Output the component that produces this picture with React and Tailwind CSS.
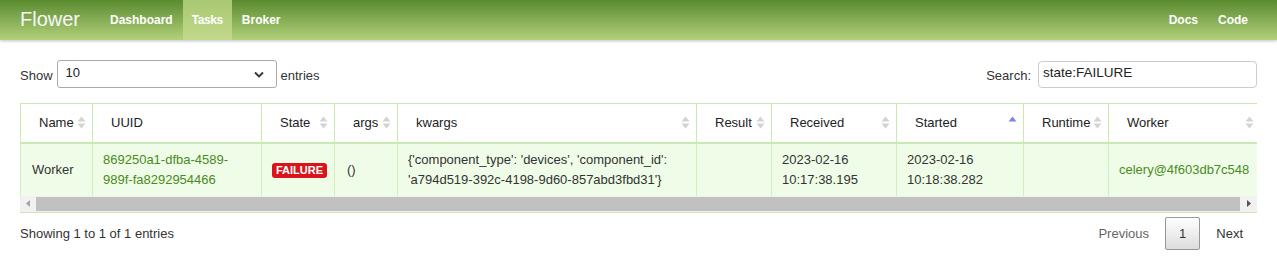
import React from "react";

const SortIcon = ({ dir }) => (
    <svg width="9" height="13" viewBox="0 0 9 13" className="shrink-0">
        <polygon points="4.5,0.5 8.5,5.5 0.5,5.5" fill={dir === "asc" ? "#8181e6" : dir ? "transparent" : "#d3d3d3"} />
        <polygon points="0.5,7.5 8.5,7.5 4.5,12.5" fill={dir ? "transparent" : "#d3d3d3"} />
    </svg>
);

const columns = [
    { name: "Name", w: 72 },
    { name: "UUID", w: 169, nosort: true },
    { name: "State", w: 73 },
    { name: "args", w: 63 },
    { name: "kwargs", w: 299 },
    { name: "Result", w: 75 },
    { name: "Received", w: 125 },
    { name: "Started", w: 127, dir: "asc" },
    { name: "Runtime", w: 85 },
    { name: "Worker", w: 152 },
];

export default function App() {
    return (
        <div className="min-h-screen bg-white text-[13px] text-[#333] font-['Liberation_Sans',Arial,sans-serif]">
            {/* navbar */}
            <nav className="h-[40px] flex items-stretch justify-between bg-gradient-to-b from-[#5a8b2f] to-[#b3d17b] shadow-[0_1px_3px_rgba(0,0,0,0.25)]">
                <div className="flex items-stretch">
                    <a className="pl-[20px] pr-[20px] flex items-center text-[20px] text-[#f7f7f7] pb-[2px]">Flower</a>
                    <a className="px-[10px] flex items-center text-[12px] font-bold text-white">Dashboard</a>
                    <a className="px-[9px] flex items-center text-[12px] font-bold text-white tracking-[-0.4px] bg-gradient-to-b from-[#a9c873] to-[#c1d98b]">Tasks</a>
                    <a className="px-[10px] flex items-center text-[12px] font-bold text-white">Broker</a>
                </div>
                <div className="flex items-stretch pr-[19px]">
                    <a className="px-[10px] flex items-center text-[12px] font-bold text-white">Docs</a>
                    <a className="px-[10px] flex items-center text-[12px] font-bold text-white">Code</a>
                </div>
            </nav>

            <div className="px-[20px]">
                {/* controls */}
                <div className="flex items-center justify-between mt-[20px] h-[28px]">
                    <div className="flex items-center gap-[4px]">
                        <span className="pt-[3px]">Show</span>
                        <div className="w-[220px] h-[28px] border border-[#aaa] rounded-[3px] bg-white flex items-center justify-between pl-[8px] pr-[12px] text-[#222]">
                            <span className="pb-[2px]">10</span>
                            <svg width="10" height="7" viewBox="0 0 10 7">
                                <polyline points="1,1.5 5,5.5 9,1.5" fill="none" stroke="#333" strokeWidth="1.8" />
                            </svg>
                        </div>
                        <span className="pt-[3px]">entries</span>
                    </div>
                    <div className="flex items-center gap-[7px]">
                        <span className="pt-[3px]">Search:</span>
                        <div className="w-[219px] h-[27px] border border-[#ccc] rounded-[4px] bg-white flex items-center pl-[4px] text-[13.5px] text-[#222] pb-[1px]">
                            state:FAILURE
                        </div>
                    </div>
                </div>

                {/* table */}
                <div className="mt-[15px] w-[1237px] overflow-hidden border-b border-[#c9e8b2]">
                    <table className="table-fixed border-collapse w-[1240px]">
                        <colgroup>
                            {columns.map((c) => (
                                <col key={c.name} style={{ width: c.w }} />
                            ))}
                        </colgroup>
                        <thead>
                            <tr className="h-[39px] bg-white">
                                {columns.map((c) => (
                                    <th key={c.name} className="border border-[#c9e8b2] border-b-2 font-normal text-left p-0 align-middle">
                                        <div className="flex items-center justify-between pl-[18px] pr-[6px] text-[#222]">
                                            <span>{c.name}</span>
                                            {!c.nosort && <SortIcon dir={c.dir} />}
                                        </div>
                                    </th>
                                ))}
                            </tr>
                        </thead>
                        <tbody>
                            <tr className="h-[53px] bg-[#effde8] leading-[20px]">
                                <td className="border-x border-[#d3eec1] px-[10px] pl-[11px]">Worker</td>
                                <td className="border-x border-[#d3eec1] px-[10px] text-[#4b8a22]">869250a1-dfba-4589-989f-fa8292954466</td>
                                <td className="border-x border-[#d3eec1] px-[10px]">
                                    <span className="inline-block bg-[#d9151b] text-white font-bold text-[11px] leading-[15px] px-[4px] rounded-[3px]">FAILURE</span>
                                </td>
                                <td className="border-x border-[#d3eec1] px-[10px] pl-[12px]">()</td>
                                <td className="border-x border-[#d3eec1] px-[10px]">{"{'component_type': 'devices', 'component_id': 'a794d519-392c-4198-9d60-857abd3fbd31'}"}</td>
                                <td className="border-x border-[#d3eec1] px-[10px]"></td>
                                <td className="border-x border-[#d3eec1] px-[10px]">2023-02-16 10:17:38.195</td>
                                <td className="border-x border-[#d3eec1] px-[10px]">2023-02-16 10:18:38.282</td>
                                <td className="border-x border-[#d3eec1] px-[10px]"></td>
                                <td className="border-x border-[#d3eec1] px-[10px] text-[#4b8a22]">celery@4f603db7c548</td>
                            </tr>
                        </tbody>
                    </table>
                    {/* horizontal scrollbar */}
                    <div className="h-[16px] bg-[#f1f1f1] flex items-stretch">
                        <div className="w-[16px] flex items-center justify-center">
                            <svg width="4" height="7" viewBox="0 0 4 7"><polygon points="4,0 4,7 0,3.5" fill="#a3a3a3" /></svg>
                        </div>
                        <div className="flex-1 my-[1px] bg-[#c1c1c1] mr-[1px]"></div>
                        <div className="w-[16px] flex items-center justify-center">
                            <svg width="4" height="7" viewBox="0 0 4 7"><polygon points="0,0 0,7 4,3.5" fill="#505050" /></svg>
                        </div>
                    </div>
                </div>

                {/* footer */}
                <div className="flex items-center justify-between mt-[4px]">
                    <div className="pt-[2px]">Showing 1 to 1 of 1 entries</div>
                    <div className="flex items-center">
                        <span className="px-[13px] py-[6px] leading-[19px] border border-transparent text-[#666]">Previous</span>
                        <span className="ml-[2px] px-[13px] py-[6px] leading-[19px] border border-[#979797] rounded-[2px] bg-gradient-to-b from-white to-[#dcdcdc] text-[#333]">1</span>
                        <span className="ml-[2px] px-[13px] py-[6px] leading-[19px] border border-transparent text-[#333]">Next</span>
                    </div>
                </div>
            </div>
        </div>
    );
}
